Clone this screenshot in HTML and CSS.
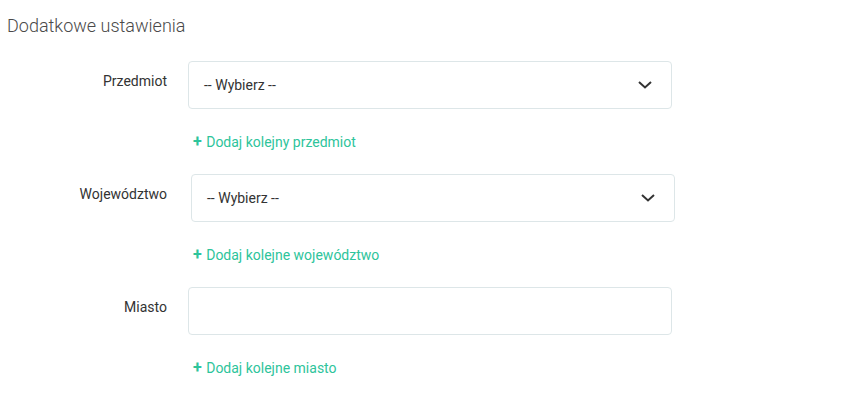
FILE: index.html
```html
<!DOCTYPE html>
<html lang="pl">
<head>
    <meta charset="UTF-8">
    <title>Dodatkowe ustawienia</title>
    <link rel="stylesheet" href="styles.css">
</head>
<body>
<div class="settings">
    <h2 class="settings-title">Dodatkowe ustawienia</h2>
    <div class="form-row">
        <label class="form-label">Przedmiot</label>
        <div class="form-field">
            <div class="select-box">
                <span>-- Wybierz --</span>
                <svg class="chevron" width="14" height="8" viewBox="0 0 14 8"><path d="M1 1l6 5.5L13 1" fill="none" stroke="#333" stroke-width="2"/></svg>
            </div>
            <a class="add-link" href="#"><b>+</b> Dodaj kolejny przedmiot</a>
        </div>
    </div>
    <div class="form-row">
        <label class="form-label">Województwo</label>
        <div class="form-field">
            <div class="select-box shifted">
                <span>-- Wybierz --</span>
                <svg class="chevron" width="14" height="8" viewBox="0 0 14 8"><path d="M1 1l6 5.5L13 1" fill="none" stroke="#333" stroke-width="2"/></svg>
            </div>
            <a class="add-link" href="#"><b>+</b> Dodaj kolejne województwo</a>
        </div>
    </div>
    <div class="form-row">
        <label class="form-label">Miasto</label>
        <div class="form-field">
            <input class="text-box" type="text">
            <a class="add-link" href="#"><b>+</b> Dodaj kolejne miasto</a>
        </div>
    </div>
</div>
</body>
</html>
```

FILE: styles.css
```css
* {
    padding: 0;
    margin: 0;
    box-sizing: border-box;
}
body {
    font-family: Roboto, "Liberation Sans", sans-serif;
    background: #fff;
    color: #333;
}
.settings {
    padding: 14px 0 0 7px;
}
.settings-title {
    font-size: 18px;
    font-weight: 300;
    color: #4a4a4a;
    line-height: 24px;
    margin-bottom: 23px;
}
.form-row {
    display: flex;
    margin-bottom: 22px;
}
.form-label {
    width: 160px;
    text-align: right;
    font-size: 14px;
    line-height: 20px;
    padding-top: 10px;
    color: #333;
}
.form-field {
    margin-left: 21px;
    width: 484px;
}
.select-box,
.text-box {
    display: flex;
    align-items: center;
    justify-content: space-between;
    width: 484px;
    height: 48px;
    border: 1px solid #dde6e8;
    border-radius: 4px;
    padding: 0 19px 0 15px;
    font-size: 14px;
    color: #333;
    background: #fff;
    font-family: inherit;
}
.select-box.shifted {
    margin-left: 3px;
}
.chevron {
    display: block;
}
.add-link {
    display: block;
    margin: 23px 0 0 5px;
    font-size: 14px;
    line-height: 20px;
    color: #2ec49b;
    text-decoration: none;
}
.add-link b {
    font-size: 16px;
    margin-right: 1px;
}
```
